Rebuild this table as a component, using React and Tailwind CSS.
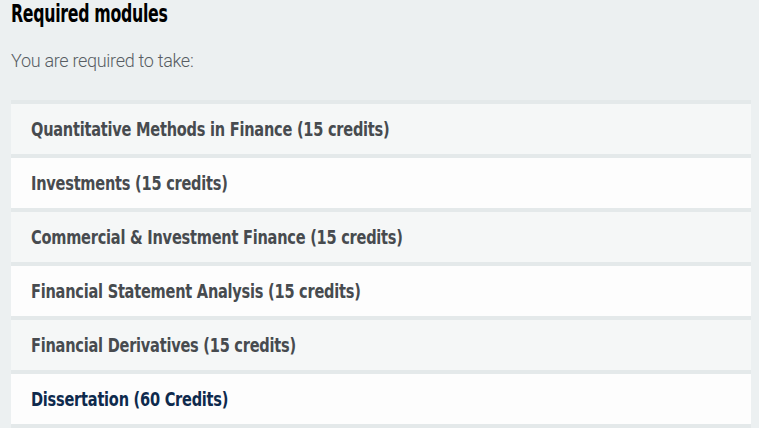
const modules = [
  { name: "Quantitative Methods in Finance (15 credits)" },
  { name: "Investments (15 credits)" },
  { name: "Commercial & Investment Finance (15 credits)" },
  { name: "Financial Statement Analysis (15 credits)" },
  { name: "Financial Derivatives (15 credits)" },
  { name: "Dissertation (60 Credits)", highlight: true },
];

function App() {
  return (
    <div className="min-h-[428px] bg-[#ecf0f1] px-[11px] font-['DejaVu_Sans_Condensed',sans-serif]">
      <h2 className="h-[28px] text-[24px] leading-[28px] font-bold text-black">
        <span className="inline-block origin-left scale-x-[0.73] tracking-[-0.4px] whitespace-nowrap">
          Required modules
        </span>
      </h2>
      <p className="mt-[21px] h-[24px] text-[18px] leading-[24px] font-light text-[#575d63] font-['Roboto',sans-serif] tracking-[-0.3px]">
        You are required to take:
      </p>
      <div className="mt-[27px] mr-[-3px] flex flex-col border-b-4 border-[#e4e9ea]">
        {modules.map((m, i) => (
          <div
            key={m.name}
            className={`h-[54px] border-t-4 border-[#e4e9ea] flex items-center px-5 ${
              i % 2 === 0 ? "bg-[#f5f7f7]" : "bg-[#fdfdfd]"
            }`}
          >
            <span
              className={`inline-block origin-left scale-x-[0.81] whitespace-nowrap text-[20px] leading-[30px] tracking-[-0.3px] font-bold ${
                m.highlight ? "text-[#0e2a4d]" : "text-[#474b4f]"
              }`}
            >
              {m.name}
            </span>
          </div>
        ))}
      </div>
    </div>
  );
}

export default App;
